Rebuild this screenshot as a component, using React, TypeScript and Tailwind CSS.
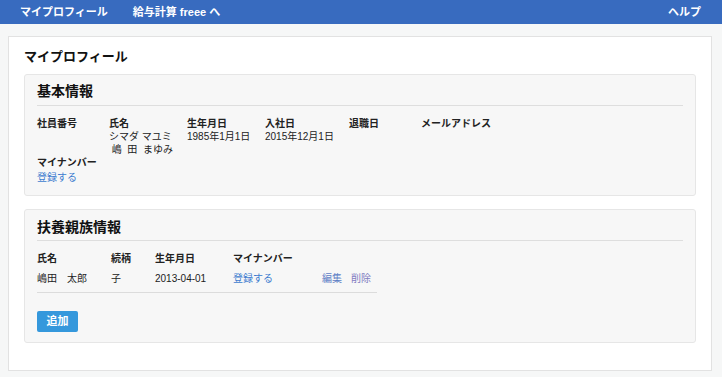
const FONT = "font-['Liberation_Sans','Noto_Sans_CJK_JP',sans-serif]";

const basicCols = [
  { label: "社員番号", w: "w-[72px]", lines: [] as string[] },
  { label: "氏名", w: "w-[78px]", lines: ["シマダ マユミ", "\u00a0嶋\u00a0 田\u00a0 まゆみ"] },
  { label: "生年月日", w: "w-[78px]", lines: ["1985年1月1日"] },
  { label: "入社日", w: "w-[84px]", lines: ["2015年12月1日"] },
  { label: "退職日", w: "w-[72px]", lines: [] as string[] },
  { label: "メールアドレス", w: "w-[100px]", lines: [] as string[] },
];

function Card({
  title,
  top,
  children,
}: {
  title: string;
  top: string;
  children: React.ReactNode;
}) {
  return (
    <section className="rounded-[3px] border border-[#e6e6e6] bg-[#f7f7f7] px-3">
      <h2
        className={`${top} border-b border-[#dedede] text-[14px] font-bold leading-[18px] text-[#111]`}
      >
        {title}
      </h2>
      {children}
    </section>
  );
}

export default function App() {
  return (
    <div className={`${FONT} min-h-screen bg-[#f6f7f7] text-[#222]`}>
      {/* top bar */}
      <header className="flex h-[24px] items-center bg-[#386bbf] pl-5 pr-[21px] text-[11px] font-bold text-white">
        <span>マイプロフィール</span>
        <span className="ml-[25px]">給与計算 freee へ</span>
        <span className="ml-auto">ヘルプ</span>
      </header>

      <main className="ml-2 mr-[10px] mt-3 border border-[#e2e2e2] bg-white px-[15px] pb-[27px] pt-3">
        <h1 className="mb-[9px] text-[13px] font-bold leading-[16px] text-[#111]">
          マイプロフィール
        </h1>

        {/* 基本情報 */}
        <div className="mb-[13px]">
          <Card title="基本情報" top="pt-[7px] pb-[5px]">
            <div className="mt-[11px] flex text-[10px] leading-[13px]">
              {basicCols.map((c) => (
                <div key={c.label} className={c.w}>
                  <div className="font-bold">{c.label}</div>
                  {c.lines.map((l) => (
                    <div key={l}>{l}</div>
                  ))}
                </div>
              ))}
            </div>
            <div className="pb-[11px] text-[10px] leading-[13px]">
              <div className="font-bold">マイナンバー</div>
              <a className="mt-[2px] block text-[#3d7ccf]">登録する</a>
            </div>
          </Card>
        </div>

        {/* 扶養親族情報 */}
        <Card title="扶養親族情報" top="pt-2 pb-[4px]">
          <div className="mt-[11px] w-[340px] text-[10px] leading-[13px]">
            <div className="flex font-bold">
              <span className="w-[74px]">氏名</span>
              <span className="w-[44px]">続柄</span>
              <span className="w-[78px]">生年月日</span>
              <span>マイナンバー</span>
            </div>
            <div className="flex border-b border-[#dcdcdc] py-[7px]">
              <span className="w-[74px]">嶋田　太郎</span>
              <span className="w-[44px]">子</span>
              <span className="w-[78px]">2013-04-01</span>
              <a className="w-[89px] text-[#3d7ccf]">登録する</a>
              <a className="w-[29px] text-[#5f80c6]">編集</a>
              <a className="text-[#7f7cc2]">削除</a>
            </div>
          </div>
          <div className="pb-[10px] pt-[18px]">
            <button className="block h-[21px] w-[41px] rounded-[2px] bg-[#3598dc] text-[11px] font-bold leading-[21px] text-white">
              追加
            </button>
          </div>
        </Card>
      </main>
    </div>
  );
}
